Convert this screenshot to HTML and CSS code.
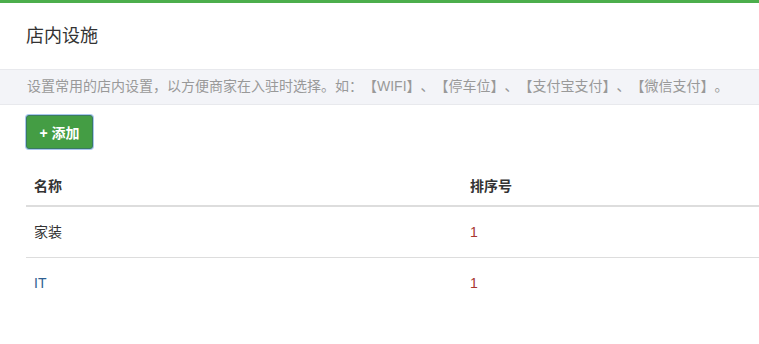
FILE: index.html
```html
<!DOCTYPE html>
<html>
  <head>
    <meta charset="UTF-8">
    <title>店内设施</title>
    <link rel="stylesheet" href="styles.css">
  </head>
  <body>
    <div class="panel">
      <div class="panel-heading">店内设施</div>
      <div class="tips">设置常用的店内设置，以方便商家在入驻时选择。如：【WIFI】、【停车位】、【支付宝支付】、【微信支付】。</div>
      <div class="panel-body">
        <button class="btn-add">+ 添加</button>
        <table class="list">
          <thead>
            <tr>
              <th>名称</th>
              <th>排序号</th>
            </tr>
          </thead>
          <tbody>
            <tr>
              <td>家装</td>
              <td class="num">1</td>
            </tr>
            <tr>
              <td class="link">IT</td>
              <td class="num">1</td>
            </tr>
          </tbody>
        </table>
      </div>
    </div>
  </body>
</html>
```

FILE: styles.css
```css
body {
    margin: 0;
    background: #fff;
    color: #333;
    font-family: "Liberation Sans", "Noto Sans CJK SC", sans-serif;
    font-size: 14px;
    overflow: hidden;
    text-spacing-trim: space-all;
}

.panel {
    border-top: 3px solid #4cae4c;
}

.panel-heading {
    padding: 20px 26px;
    font-size: 18px;
    line-height: 26px;
    color: #333;
}

.tips {
    background: #f3f4f8;
    border-top: 1px solid #e8e9ed;
    border-bottom: 1px solid #e8e9ed;
    padding: 0 27px;
    height: 34px;
    line-height: 33px;
    color: #999;
    white-space: nowrap;
}

.panel-body {
    padding: 10px 26px;
}

.btn-add {
    display: block;
    width: 67px;
    height: 34px;
    background: #449d44;
    color: #fff;
    font-family: inherit;
    font-size: 14px;
    font-weight: bold;
    border: 1px solid #3a7a62;
    border-radius: 3px;
    box-shadow: 0 0 0 1px #a9c6ee;
    padding: 0;
}

.list {
    margin-top: 16px;
    width: 872px;
    border-collapse: collapse;
    table-layout: fixed;
}

.list th,
.list td {
    text-align: left;
    padding: 16px 8px;
    line-height: 18px;
}

.list th {
    padding: 11px 8px 9px;
    line-height: 20px;
    font-weight: bold;
    color: #333;
    border-bottom: 2px solid #ddd;
}

.list td {
    border-bottom: 1px solid #ddd;
}

.list tr:last-child td {
    border-bottom: none;
}

.list .link {
    color: #2f5f91;
}

.list .num {
    color: #a8362e;
}
```
